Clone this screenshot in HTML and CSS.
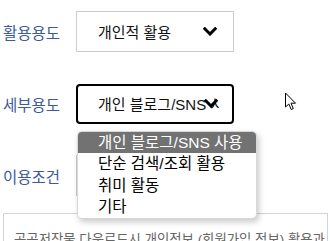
FILE: index.html
```html
<!DOCTYPE html>
<html lang="ko">
<head>
<meta charset="utf-8">
<link rel="stylesheet" href="styles.css">
</head>
<body>
<div class="form">
  <div class="row">
    <div class="label">활용용도</div>
    <div class="select">
      <span class="value">개인적 활용</span>
      <svg class="chev" width="14" height="9" viewBox="0 0 14 9"><polyline points="1.8,1.8 7,7 12.2,1.8" fill="none" stroke="#000" stroke-width="3" stroke-linecap="square"/></svg>
    </div>
  </div>
  <div class="row">
    <div class="label">세부용도</div>
    <div class="select focus">
      <span class="value">개인 블로그/SNS 사용</span>
      <svg class="chev" width="14" height="9" viewBox="0 0 14 9"><polyline points="1.8,1.8 7,7 12.2,1.8" fill="none" stroke="#000" stroke-width="3" stroke-linecap="square"/></svg>
      <ul class="menu">
        <li class="active">개인 블로그/SNS 사용</li>
        <li>단순 검색/조회 활용</li>
        <li>취미 활동</li>
        <li>기타</li>
      </ul>
    </div>
    <svg class="cursor" width="13" height="19" viewBox="0 0 13 19"><path d="M1.5,1 L1.5,15 L4.8,12 L7.2,17.5 L9.3,16.6 L7,11.2 L11.5,11.2 Z" fill="#fff" stroke="#000" stroke-width="1" stroke-linejoin="round"/></svg>
  </div>
  <div class="row">
    <div class="label">이용조건</div>
    <div class="select"></div>
  </div>
  <div class="notice">공공저작물 다운로드시 개인정보 (회원가입 정보) 활용과</div>
</div>
</body>
</html>
```
FILE: styles.css
```css
html, body {
  margin: 0;
  padding: 0;
  background: #fff;
  overflow: hidden;
}
body {
  width: 330px;
  height: 241px;
  font-family: "Liberation Sans", "Noto Sans CJK KR", sans-serif;
}
.form {
  display: flex;
  flex-direction: column;
  padding-top: 11px;
  gap: 31px;
}
.row {
  display: flex;
  align-items: center;
  height: 41px;
  position: relative;
}
.label {
  width: 73px;
  padding-left: 3px;
  font-size: 15.5px;
  color: #3b5b9b;
}
.select {
  position: relative;
  box-sizing: border-box;
  width: 158px;
  height: 41px;
  border: 1px solid #cccccc;
  display: flex;
  align-items: center;
  padding-left: 21px;
  font-size: 15px;
  color: #111;
}
.select .value {
  white-space: nowrap;
  overflow: hidden;
  width: 121px;
  display: block;
}
.select.focus {
  border: 2px solid #000;
  border-radius: 4px;
  padding-left: 20px;
  height: 40px;
}
.chev {
  position: absolute;
  right: 16px;
  top: 50%;
  margin-top: -5px;
}
.focus .chev {
  right: 14px;
}
.menu {
  position: absolute;
  left: -1px;
  top: 45px;
  width: 180px;
  margin: 0;
  padding: 0;
  list-style: none;
  background: #fff;
  border: 1px solid #d8d8d8;
  border-radius: 5px;
  box-shadow: 2px 3px 6px rgba(0,0,0,0.22);
  overflow: hidden;
  z-index: 5;
  box-sizing: border-box;
}
.menu li {
  height: 21.5px;
  line-height: 21.5px;
  padding-left: 20px;
  font-size: 15.5px;
  color: #000;
  white-space: nowrap;
}
.menu li.active {
  background: #727272;
  color: #fff;
}
.cursor {
  position: absolute;
  left: 284px;
  top: 9px;
}
.notice {
  margin-top: -14px;
  margin-left: 3px;
  width: 325px;
  height: 40px;
  box-sizing: border-box;
  border: 1px solid #d4d4d4;
  padding: 14px 0 0 10px;
  font-size: 13.4px;
  color: #666;
  white-space: nowrap;
  overflow: hidden;
}
```
